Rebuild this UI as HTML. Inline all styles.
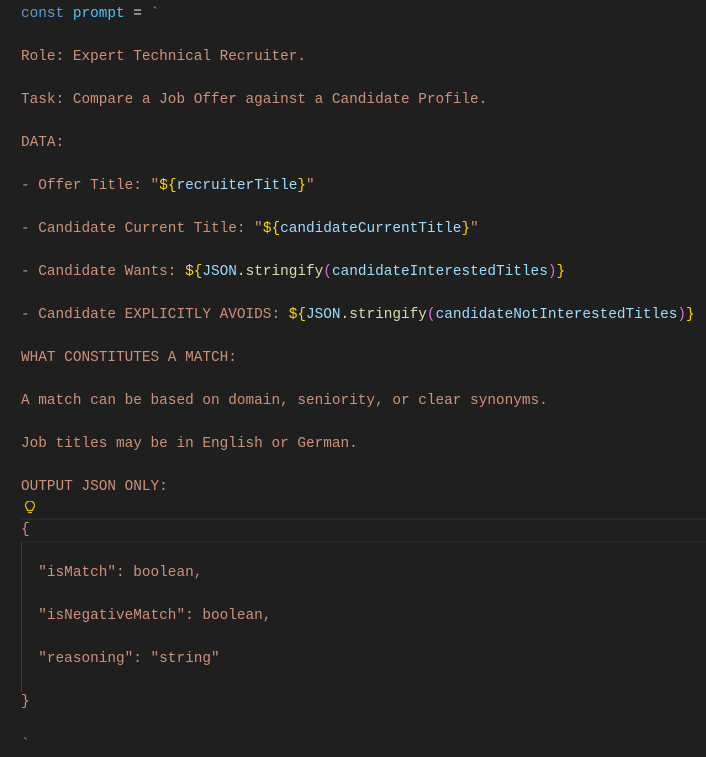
<!DOCTYPE html>
<html><head><meta charset="utf-8"><style>
html,body{margin:0;padding:0;background:#1f1f1f;width:706px;height:755px;overflow:hidden}
pre{margin:0;position:absolute;left:21px;top:4px;font-family:"Liberation Mono",monospace;font-size:14.4px;line-height:21.5px;color:#ce9178;white-space:pre}
.k{color:#569cd6}.c{color:#4fc1ff}.o{color:#d4d4d4}.y{color:#ffd700}.v{color:#9cdcfe}.f{color:#dcdcaa}.p{color:#da70d6}
.hl{position:absolute;left:21px;right:0;top:518px;height:21px;border-top:2px solid #282828;border-bottom:2px solid #282828}
.guide{position:absolute;left:21px;top:542px;width:1px;height:150px;background:#404040}
</style></head><body>
<div class="hl"></div><div class="guide"></div>
<svg style="position:absolute;left:24px;top:501px" width="12" height="14" viewBox="0 0 12 14"><path d="M3.5 9.5 C3.5 7.5 1.5 6.5 1.5 4.5 A4.5 4.5 0 0 1 10.5 4.5 C10.5 6.5 8.5 7.5 8.5 9.5 Z M4 11.5 H8" fill="none" stroke="#e2b714" stroke-width="1.3"/></svg>
<pre><span class="k">const</span> <span class="c">prompt</span> <span class="o">=</span> `

Role: Expert Technical Recruiter.

Task: Compare a Job Offer against a Candidate Profile.

DATA:

- Offer Title: "<span class="y">${</span><span class="v">recruiterTitle</span><span class="y">}</span>"

- Candidate Current Title: "<span class="y">${</span><span class="v">candidateCurrentTitle</span><span class="y">}</span>"

- Candidate Wants: <span class="y">${</span><span class="v">JSON</span><span class="o">.</span><span class="f">stringify</span><span class="p">(</span><span class="v">candidateInterestedTitles</span><span class="p">)</span><span class="y">}</span>

- Candidate EXPLICITLY AVOIDS: <span class="y">${</span><span class="v">JSON</span><span class="o">.</span><span class="f">stringify</span><span class="p">(</span><span class="v">candidateNotInterestedTitles</span><span class="p">)</span><span class="y">}</span>

WHAT CONSTITUTES A MATCH:

A match can be based on domain, seniority, or clear synonyms.

Job titles may be in English or German.

OUTPUT JSON ONLY:

{

  "isMatch": boolean,

  "isNegativeMatch": boolean,

  "reasoning": "string"

}

`</pre>
</body></html>
